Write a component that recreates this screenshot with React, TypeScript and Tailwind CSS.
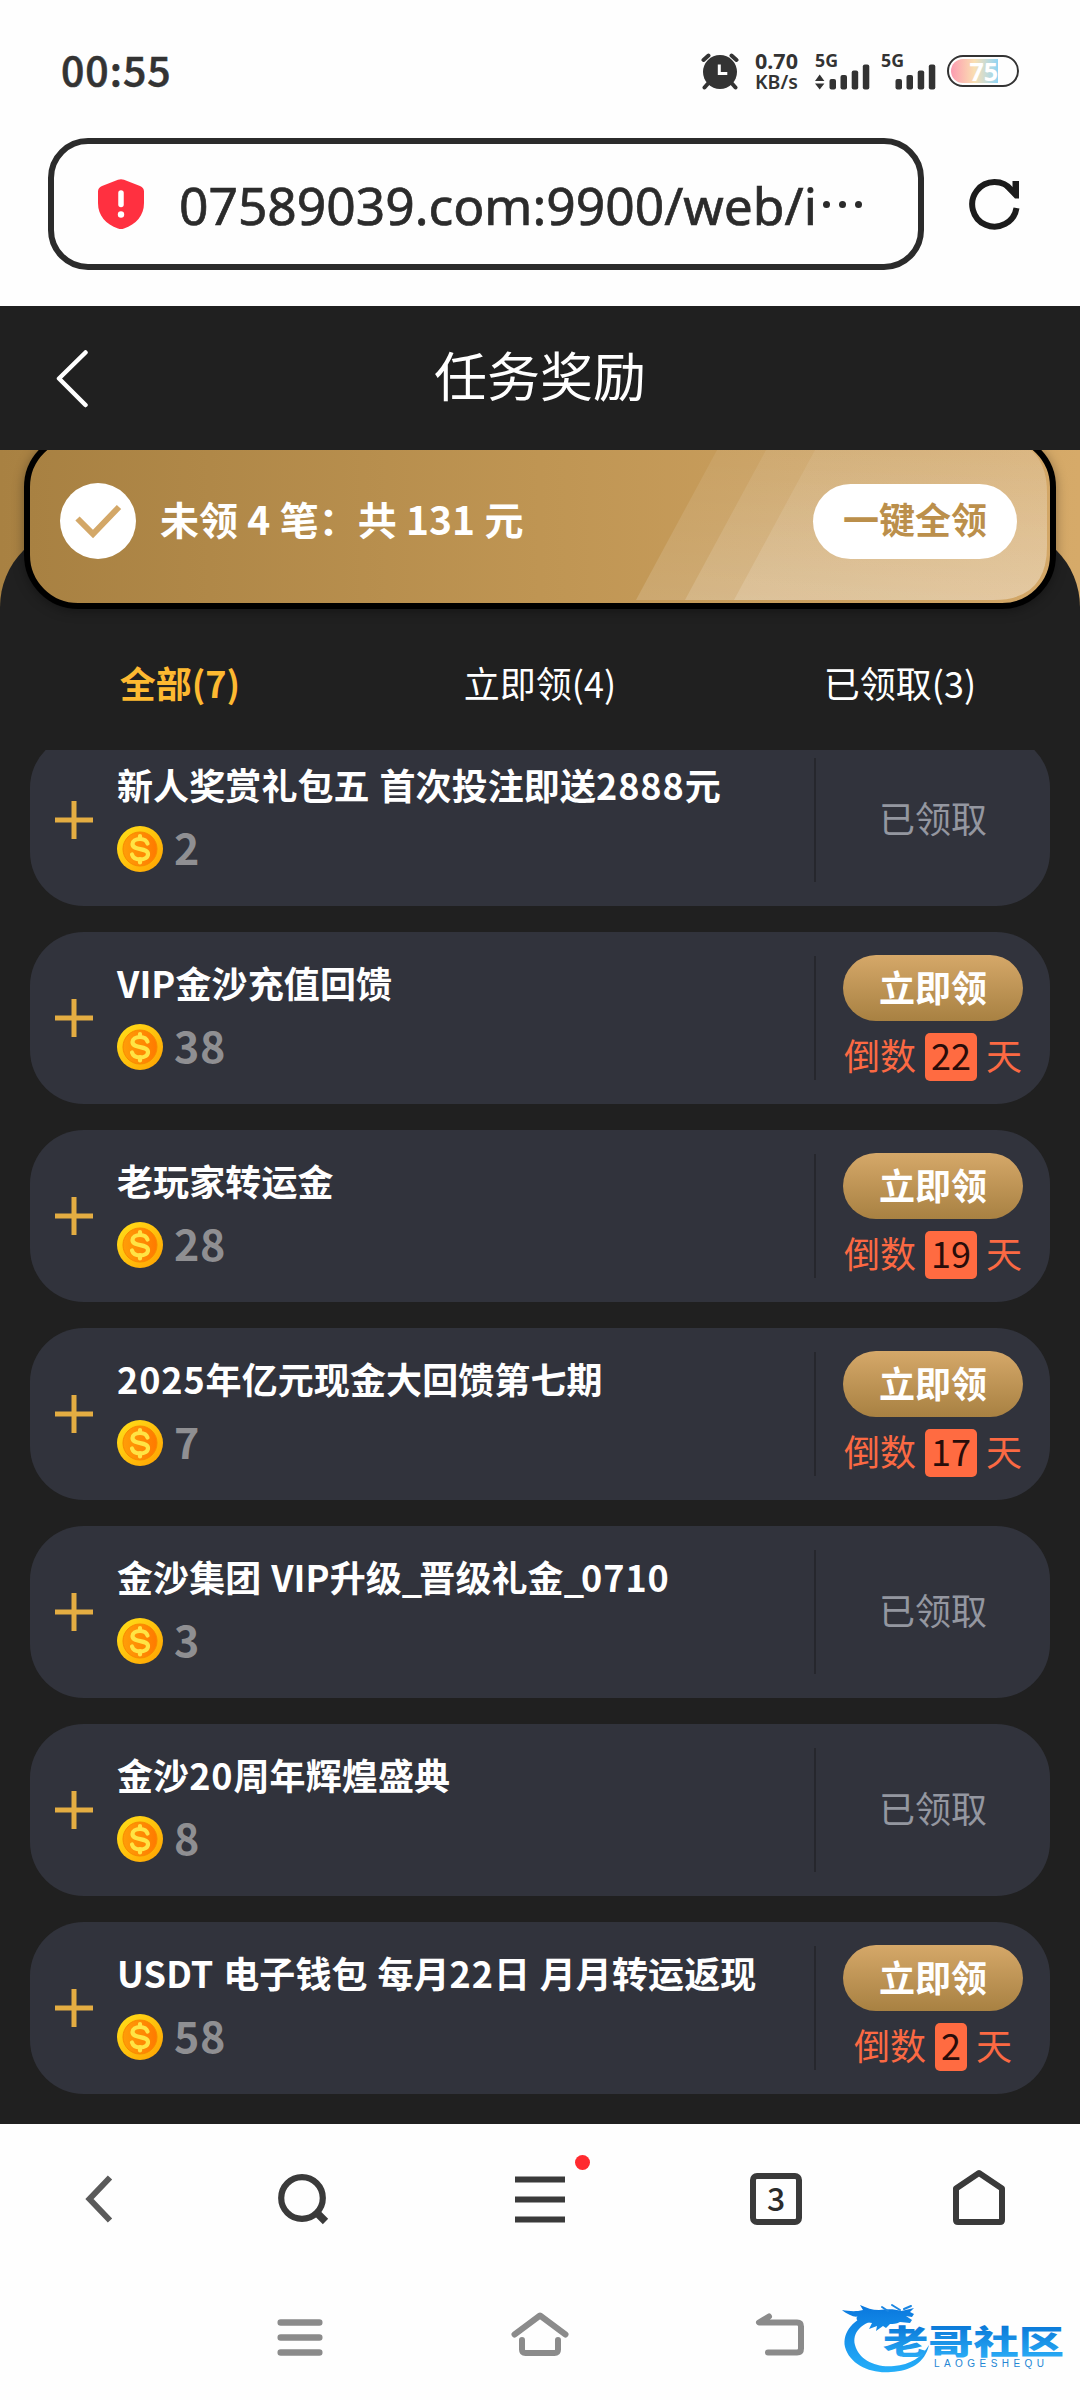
import type { ReactNode } from "react";

type Task = {
  title: string;
  amount: number;
  days?: number;
};

const TASKS: Task[] = [
  { title: "新人奖赏礼包五 首次投注即送2888元", amount: 2 },
  { title: "VIP金沙充值回馈", amount: 38, days: 22 },
  { title: "老玩家转运金", amount: 28, days: 19 },
  { title: "2025年亿元现金大回馈第七期", amount: 7, days: 17 },
  { title: "金沙集团 VIP升级_晋级礼金_0710", amount: 3 },
  { title: "金沙20周年辉煌盛典", amount: 8 },
  { title: "USDT 电子钱包 每月22日 月月转运返现", amount: 58, days: 2 },
];

const TABS = [
  { name: "全部(7)", active: true },
  { name: "立即领(4)", active: false },
  { name: "已领取(3)", active: false },
];

function Signal({ arrows = false }: { arrows?: boolean }) {
  return (
    <svg className="h-[40px] w-[56px] shrink-0 overflow-visible" viewBox="0 0 56 40" fill="#333">
      <text x="0" y="17" fontSize="18" fontWeight="700" textLength="23" lengthAdjust="spacingAndGlyphs">
        5G
      </text>
      {arrows && <path d="M0 31l4.700-6.500 4.700 6.500zM0 33.500h9.400l-4.700 6z" />}
      <rect x="14.500" y="29" width="6.500" height="10.500" rx="2" />
      <rect x="25.500" y="25" width="6.500" height="14.500" rx="2" />
      <rect x="36.700" y="20.500" width="6.500" height="19" rx="2" />
      <rect x="47.800" y="14.500" width="6.500" height="25" rx="2" />
    </svg>
  );
}

function StatusBar() {
  return (
    <div className="flex h-[138px] items-start pl-[61px] pr-[61px] text-[#333]">
      <span className="mt-[38px] font-['Noto_Sans_CJK_SC',sans-serif] text-[41px] leading-[60px] font-medium tracking-[1px] [-webkit-text-stroke:0.6px]">
        00:55
      </span>
      <div className="mt-[50px] ml-auto flex h-[40px] items-start">
        <svg className="h-[40px] w-[40px]" viewBox="0 0 40 40">
          <g fill="none" stroke="#333" strokeWidth="4" strokeLinecap="round">
            <path d="M3.500 10l5-4.500M36.500 10l-5-4.500M8 33.500l-3.500 4M32 33.500l3.500 4" />
          </g>
          <circle cx="20" cy="22" r="17" fill="#333" />
          <path d="M19.300 14.500v9h8" fill="none" stroke="#fff" strokeWidth="3" />
        </svg>
        <div className="ml-[15px] flex w-[44px] flex-col text-[21.500px] leading-[21px] font-bold">
          <span>0.70</span>
          <span className="mt-px text-[19.500px] leading-[20px] font-semibold">KB/s</span>
        </div>
        <div className="ml-[16px] flex gap-[10px]">
          <Signal arrows />
          <Signal />
        </div>
        <div className="mt-[5px] ml-[10px] flex h-[32px] w-[72px] shrink-0 items-center rounded-full border-[2.500px] border-[#333] p-[2px]">
          <div className="flex h-full w-[47px] items-center justify-end rounded-l-full bg-linear-to-r from-[#fb9bb0] via-[#f9dfb2] to-[#8fd4f4] text-[25px] leading-none font-bold text-white">
            75
          </div>
        </div>
      </div>
    </div>
  );
}

function AddressBar() {
  return (
    <div className="flex h-[168px] items-start px-[48px]">
      <div className="flex h-[132px] w-[876px] items-center rounded-[40px] border-[6px] border-[#2b2b2b] pl-[43px]">
        <svg className="h-[52px] w-[48px]" viewBox="0 0 48 52">
          <path
            d="M21 1.800q3-1.300 6 0L43 8q4 1.500 4 5.500V25c0 13-8 21-20 25.500q-3 1.200-6 0C9 46 1 38 1 25V13.500Q1 9.500 5 8z"
            fill="#ff3040"
          />
          <path d="M24 15v11.500" stroke="#fff" strokeWidth="5.500" strokeLinecap="round" />
          <circle cx="24" cy="36.500" r="3.200" fill="#fff" />
        </svg>
        <span className="mt-[2px] ml-[34px] text-[51.5px] leading-[70px] whitespace-nowrap text-[#2b2b2b] [-webkit-text-stroke:0.7px]">
          07589039.com:9900/web/i
        </span>
        <span className="ml-[6px] flex gap-[9px]">
          <i className="size-[7px] rounded-full bg-[#2b2b2b]" />
          <i className="size-[7px] rounded-full bg-[#2b2b2b]" />
          <i className="size-[7px] rounded-full bg-[#2b2b2b]" />
        </span>
      </div>
      <svg className="mt-[40px] ml-[45px] h-[52px] w-[52px]" viewBox="0 0 52 52" fill="none" stroke="#1c1c1c">
        <path d="M47.500 30A22.300 22.300 0 1 1 43 12.500" strokeWidth="6" />
        <path d="M50 3v17.500h-4L35.500 9.500h8V3z" fill="#1c1c1c" stroke="none" />
      </svg>
    </div>
  );
}

function Coin() {
  return (
    <svg className="size-[46px]" viewBox="0 0 46 46">
      <defs>
        <linearGradient id="rim" x1="0" y1="0" x2="1" y2="1">
          <stop offset="0" stopColor="#ffe21a" />
          <stop offset="1" stopColor="#ffa000" />
        </linearGradient>
        <linearGradient id="face" x1="0" y1="0" x2="1" y2="0">
          <stop offset="0" stopColor="#ff9d08" />
          <stop offset="1" stopColor="#ff7a00" />
        </linearGradient>
      </defs>
      <circle cx="23" cy="23" r="23" fill="url(#rim)" />
      <circle cx="23" cy="23" r="17" fill="url(#face)" stroke="#f88a00" />
      <g fill="none" stroke="#ffe445" strokeWidth="4.200" strokeLinecap="round">
        <path d="M30.500 17.500C29.500 14 26.500 13 23 13c-4.500 0-7.500 2-7.500 5 0 7 15.500 3.200 15.500 10 0 3.500-3.500 5.500-8 5.500-4 0-7-1.500-8-5" />
        <path d="M23 10v3M23 33v3.500" />
      </g>
    </svg>
  );
}

function ClaimCard({ children }: { children: ReactNode }) {
  return (
    <div className="relative -mt-[17px] flex h-[176px] w-full shrink-0 items-center overflow-hidden rounded-[54px] border-[6px] border-black bg-linear-to-r from-[#a88142] via-[#bf9553] to-[#d3a767] pr-[33px] pl-[30px] shadow-[0_2px_12px_rgba(0,0,0,0.350)]">
      <svg className="absolute top-0 left-0 h-[164px] w-[1020px]" viewBox="0 0 1020 164">
        <defs>
          <linearGradient id="stripe" x1="0" y1="0" x2="0" y2="1">
            <stop offset="0" stopColor="#fff" stopOpacity="0.060" />
            <stop offset="1" stopColor="#fff" stopOpacity="0.150" />
          </linearGradient>
        </defs>
        <path d="M606 161L693 0h270q54 0 54 54v53q0 54-54 54z" fill="url(#stripe)" />
        <path d="M655 161L742 0h221q54 0 54 54v53q0 54-54 54z" fill="url(#stripe)" />
        <path d="M704 161L791 0h172q54 0 54 54v53q0 54-54 54z" fill="url(#stripe)" />
      </svg>
      {children}
    </div>
  );
}

function Summary() {
  return (
    <div className="h-[174px] overflow-hidden bg-linear-to-r from-[#a88142] to-[#d6aa69]">
      <div className="flex h-[77px] items-start px-[24px]">
        <ClaimCard>
          <svg className="relative size-[76px]" viewBox="0 0 76 76">
            <circle cx="38" cy="38" r="38" fill="#fff" />
            <path d="M17.500 35.500L33 51l26-27" fill="none" stroke="#d3a767" strokeWidth="6" />
          </svg>
          <span className="relative ml-[24px] pb-[6px] text-[39px] leading-[60px] font-bold text-white [word-spacing:0.500px]">
            未领 4 笔：共 131 元
          </span>
          <button className="relative ml-auto h-[75px] w-[204px] rounded-full bg-white pb-[6px] text-[36px] font-bold text-[#bb8f4b]">
            一键全领
          </button>
        </ClaimCard>
      </div>
      <div className="h-[97px] rounded-t-[80px] bg-[#202020]" />
    </div>
  );
}

// digits run a little wide and underscores a little narrow next to the hanzi
function Title({ text }: { text: string }) {
  return (
    <h3 className="-mt-px h-[50px] text-[36px] leading-[50px] font-bold tracking-[0.100px] whitespace-nowrap text-white [word-spacing:1.500px]">
      {text.split(/(\d+|_)/).map((part, i) => (
        <span
          key={i}
          className={part === "_" ? "tracking-[-3px]" : /^\d/.test(part) ? "tracking-[0.900px]" : ""}
        >
          {part}
        </span>
      ))}
    </h3>
  );
}

function TaskRow({ task }: { task: Task }) {
  return (
    <li className="flex h-[172px] shrink-0 items-center rounded-[54px] bg-[#31333c]">
      <svg className="ml-[25px] size-[38px]" viewBox="0 0 38 38" stroke="#e4ad42" strokeWidth="5">
        <path d="M19 0v38M0 19h38" />
      </svg>
      <div className="ml-[24px] flex h-[120px] flex-1 flex-col">
        <Title text={task.title} />
        <div className="mt-[17px] flex h-[46px] items-center gap-[11px]">
          <Coin />
          <span className="-mt-[7px] text-[43px] leading-[46px] font-bold tracking-[0.600px] text-[#8f8f92]">
            {task.amount}
          </span>
        </div>
      </div>
      <div className="flex h-[124px] w-[236px] items-center justify-center border-l-2 border-[#26272d]">
        {task.days === undefined ? (
          <span className="pb-[6px] text-[36px] text-[#9497a0]">已领取</span>
        ) : (
          <div className="flex flex-col items-center gap-[12px]">
            <button className="h-[66px] w-[180px] rounded-full bg-linear-to-b from-[#d5a869] to-[#a88142] pb-[5px] text-[36px] font-bold text-white">
              立即领
            </button>
            <p className="flex h-[48px] items-center gap-[9px] text-[36px] leading-[48px] text-[#fb6943]">
              <span className="pb-[6px]">倒数</span>
              <span className="flex h-[48px] items-center rounded-[5px] bg-[#ff6b41] px-[6px] pb-[6px] text-[#2a0d0a]">
                {task.days}
              </span>
              <span className="pb-[6px]">天</span>
            </p>
          </div>
        )}
      </div>
    </li>
  );
}

function TaskPage() {
  return (
    <main className="h-[1818px] shrink-0 overflow-hidden bg-[#202020] font-['Noto_Sans_CJK_SC',sans-serif]">
      <header className="grid h-[144px] grid-cols-[145px_1fr_145px] items-center">
        <svg className="ml-[54px] h-[60px] w-[36px]" viewBox="0 0 36 60" fill="none" stroke="#fff" strokeWidth="4.500" strokeLinecap="round" strokeLinejoin="round">
          <path d="M31.500 4.500L5 30.500l26.500 26.500" />
        </svg>
        <h1 className="pb-[9px] text-center text-[53px] leading-[80px] text-white">任务奖励</h1>
      </header>
      <Summary />
      <nav className="grid h-[126px] grid-cols-3 pt-[33px] text-center text-[36px] leading-[50px] text-white">
        {TABS.map((tab) => (
          <a key={tab.name} className={tab.active ? "font-bold text-[#fdb931]" : ""}>
            {tab.name}
          </a>
        ))}
      </nav>
      <div className="h-[1374px] overflow-hidden px-[30px]">
        <ul className="-mt-[16px] flex flex-col gap-[26px]">
          {TASKS.map((task) => (
            <TaskRow key={task.title} task={task} />
          ))}
        </ul>
      </div>
    </main>
  );
}

function BrowserBar() {
  return (
    <div className="flex h-[150px] items-center pl-[82px]">
      <svg className="h-[60px] w-[34px]" viewBox="0 0 34 60" fill="none" stroke="#5a5a5a" strokeWidth="6">
        <path d="M28 8.500L7.500 30 28 51.500" />
      </svg>
      <svg className="ml-[158px] h-[60px] w-[60px]" viewBox="0 0 60 60" fill="none" stroke="#3a3a3a">
        <circle cx="28" cy="29" r="20.800" strokeWidth="6.200" />
        <path d="M43 44l8.500 8.500" strokeWidth="7.500" />
      </svg>
      <div className="relative ml-[181px] h-[60px] w-[50px]">
        <svg className="h-[60px] w-[50px]" viewBox="0 0 50 60" stroke="#3a3a3a" strokeWidth="6">
          <path d="M0 10.500h50M0 30.500h50M0 50.500h50" />
        </svg>
        <span className="absolute -top-[14px] left-[60px] size-[15px] rounded-full bg-[#ff2a2f]" />
      </div>
      <div className="ml-[185px] flex size-[52px] items-center justify-center rounded-[7px] border-[6px] border-[#3a3a3a] pb-[5px] font-['Noto_Sans_CJK_SC',sans-serif] text-[32px] leading-none font-medium text-[#2b2b2b]">
        3
      </div>
      <svg className="ml-[149px] h-[60px] w-[56px]" viewBox="0 0 56 60" fill="none" stroke="#3a3a3a" strokeWidth="6" strokeLinejoin="round">
        <path d="M5 19.500L28 4l23 15.500V51q0 2-2 2H7q-2 0-2-2z" />
      </svg>
    </div>
  );
}

function Logo() {
  return (
    <svg className="mt-[24px] ml-[32px] h-[84px] w-[226px] shrink-0" viewBox="0 0 226 84">
      <defs>
        <linearGradient id="logo" gradientUnits="userSpaceOnUse" x1="0" y1="8" x2="0" y2="78">
          <stop offset="0" stopColor="#0a78de" />
          <stop offset="1" stopColor="#27b2fb" />
        </linearGradient>
        <linearGradient id="logoText" x1="0" y1="0" x2="0" y2="1">
          <stop offset="0.200" stopColor="#0a78d8" />
          <stop offset="1" stopColor="#2fb4fa" />
        </linearGradient>
      </defs>
      <g fill="url(#logo)">
        <path d="M32 15C12 20 0 34 3 49c5 18 26 27 46 25 19-1 34-9 38-27-7 12-19 20-35 21C34 70 17 62 13 47 10 35 19 24 38 21z" />
        {/* dragon head and whiskers */}
        <path d="M0 12c7 1 13 2 21 0l-3-5c7 3 12 5 19 5 9-1 16-1 22 1 5-1 9-2 13-3l-4 4 4 2-2 3-6-1 6 4-2 3-10-1c-4 2-7 2-10 2l-4 4-3-2-7 5 1-5-8 3 3-6-7-1-6 0c-3-2-3-5-1-6C14 20 6 17 0 12z" />
      </g>
      <path d="M50 7l8 5M40 9l6 4M62 11l7-3" stroke="#1b86e2" strokeWidth="2" strokeLinecap="round" />
      <g fontFamily="'Noto Sans CJK SC', sans-serif" fill="url(#logoText)">
        <text x="41" y="55.500" fontSize="33" fontWeight="900" textLength="181" lengthAdjust="spacingAndGlyphs">
          老哥社区
        </text>
        <text x="92" y="68.500" fontSize="10" textLength="110" fill="#2486d4" fontFamily="'Liberation Sans', sans-serif">
          LAOGESHEQU
        </text>
      </g>
    </svg>
  );
}

function SystemBar() {
  return (
    <div className="flex h-[126px] items-start pl-[270px]">
      <svg className="mt-[35px] h-[60px] w-[60px]" viewBox="0 0 60 60" stroke="#8b8b8b" strokeWidth="6.500" strokeLinecap="round">
        <path d="M10.700 13.500h38.600M10.700 28.500h38.600M10.700 43.500h38.600" />
      </svg>
      <svg className="mt-[35px] ml-[180px] h-[60px] w-[60px]" viewBox="0 0 60 60" fill="none" stroke="#8b8b8b" strokeWidth="6" strokeLinecap="round" strokeLinejoin="round">
        <path d="M4.500 25.500L30 6.500l25.500 19M12 31v9.500q0 3.500 3.500 3.500h29q3.500 0 3.500-3.500V31" />
      </svg>
      <svg className="mt-[35px] ml-[180px] h-[60px] w-[60px]" viewBox="0 0 60 60" fill="none" stroke="#8b8b8b" strokeWidth="6" strokeLinecap="round" strokeLinejoin="round">
        <path d="M19 7.500L9 13.500h38q4 0 4 4v22q0 4-4 4H18" />
      </svg>
      <Logo />
    </div>
  );
}

export default function App() {
  return (
    <div className="flex h-[2400px] w-[1080px] flex-col overflow-hidden bg-[#fefefe] font-['Noto_Sans','Noto_Sans_CJK_SC',sans-serif]">
      <StatusBar />
      <AddressBar />
      <TaskPage />
      <BrowserBar />
      <SystemBar />
    </div>
  );
}
